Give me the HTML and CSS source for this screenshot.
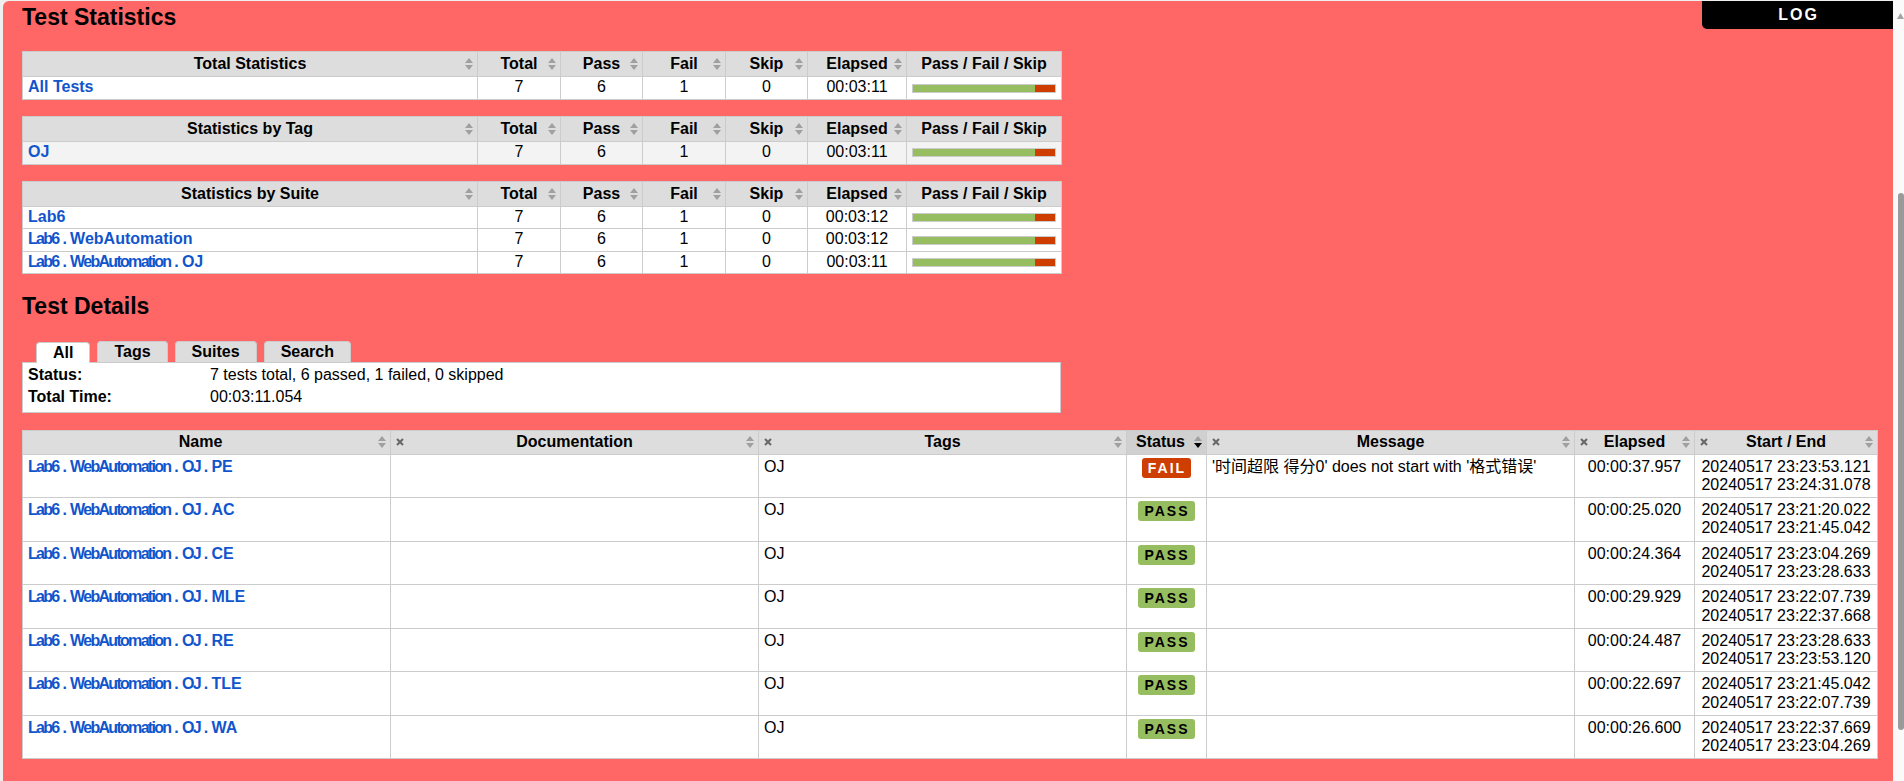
FILE: index.html
```html
<!DOCTYPE html>
<html lang="en">
<head>
<meta charset="utf-8">
<title>Lab6 Report</title>
<link rel="stylesheet" href="styles.css">
</head>
<body>
<div class="viewport">
  <main class="page">
    <div class="panel">
      <a class="log-link" href="#">LOG</a>

      <h2 class="section-title">Test Statistics</h2>

      <table class="statistics">
        <colgroup>
          <col class="c-name"><col class="c-stat"><col class="c-stat2"><col class="c-stat"><col class="c-stat2"><col class="c-elapsed"><col class="c-graph">
        </colgroup>
        <thead>
          <tr>
            <th class="sortable">Total Statistics</th>
            <th class="sortable">Total</th>
            <th class="sortable">Pass</th>
            <th class="sortable">Fail</th>
            <th class="sortable">Skip</th>
            <th class="sortable">Elapsed</th>
            <th class="graph-head">Pass / Fail / Skip</th>
          </tr>
        </thead>
        <tbody>
          <tr>
            <td class="stat-name"><a href="#">All Tests</a></td>
            <td>7</td><td>6</td><td>1</td><td>0</td><td>00:03:11</td>
            <td class="graph-cell"><div class="graph"><div class="pass-bar" style="width:85.71%"></div><div class="fail-bar" style="width:14.29%"></div></div></td>
          </tr>
        </tbody>
      </table>

      <table class="statistics">
        <colgroup>
          <col class="c-name"><col class="c-stat"><col class="c-stat2"><col class="c-stat"><col class="c-stat2"><col class="c-elapsed"><col class="c-graph">
        </colgroup>
        <thead>
          <tr>
            <th class="sortable">Statistics by Tag</th>
            <th class="sortable">Total</th>
            <th class="sortable">Pass</th>
            <th class="sortable">Fail</th>
            <th class="sortable">Skip</th>
            <th class="sortable">Elapsed</th>
            <th class="graph-head">Pass / Fail / Skip</th>
          </tr>
        </thead>
        <tbody>
          <tr class="highlight">
            <td class="stat-name"><a href="#">OJ</a></td>
            <td>7</td><td>6</td><td>1</td><td>0</td><td>00:03:11</td>
            <td class="graph-cell"><div class="graph"><div class="pass-bar" style="width:85.71%"></div><div class="fail-bar" style="width:14.29%"></div></div></td>
          </tr>
        </tbody>
      </table>

      <table class="statistics">
        <colgroup>
          <col class="c-name"><col class="c-stat"><col class="c-stat2"><col class="c-stat"><col class="c-stat2"><col class="c-elapsed"><col class="c-graph">
        </colgroup>
        <thead>
          <tr>
            <th class="sortable">Statistics by Suite</th>
            <th class="sortable">Total</th>
            <th class="sortable">Pass</th>
            <th class="sortable">Fail</th>
            <th class="sortable">Skip</th>
            <th class="sortable">Elapsed</th>
            <th class="graph-head">Pass / Fail / Skip</th>
          </tr>
        </thead>
        <tbody>
          <tr>
            <td class="stat-name"><a href="#">Lab6</a></td>
            <td>7</td><td>6</td><td>1</td><td>0</td><td>00:03:12</td>
            <td class="graph-cell"><div class="graph"><div class="pass-bar" style="width:85.71%"></div><div class="fail-bar" style="width:14.29%"></div></div></td>
          </tr>
          <tr>
            <td class="stat-name"><a href="#"><span class="parent">Lab6<span class="sep"> . </span></span>WebAutomation</a></td>
            <td>7</td><td>6</td><td>1</td><td>0</td><td>00:03:12</td>
            <td class="graph-cell"><div class="graph"><div class="pass-bar" style="width:85.71%"></div><div class="fail-bar" style="width:14.29%"></div></div></td>
          </tr>
          <tr>
            <td class="stat-name"><a href="#"><span class="parent">Lab6<span class="sep"> . </span>WebAutomation<span class="sep"> . </span></span>OJ</a></td>
            <td>7</td><td>6</td><td>1</td><td>0</td><td>00:03:11</td>
            <td class="graph-cell"><div class="graph"><div class="pass-bar" style="width:85.71%"></div><div class="fail-bar" style="width:14.29%"></div></div></td>
          </tr>
        </tbody>
      </table>

      <h2 class="section-title details-title">Test Details</h2>

      <ul class="tabs">
        <li class="tab selected">All</li>
        <li class="tab">Tags</li>
        <li class="tab">Suites</li>
        <li class="tab">Search</li>
      </ul>

      <table class="details">
        <tbody>
          <tr><th>Status:</th><td>7 tests total, 6 passed, 1 failed, 0 skipped</td></tr>
          <tr><th>Total Time:</th><td>00:03:11.054</td></tr>
        </tbody>
      </table>

      <table class="test-details">
        <colgroup>
          <col class="t-name"><col class="t-doc"><col class="t-tags"><col class="t-status"><col class="t-msg"><col class="t-elapsed"><col class="t-times">
        </colgroup>
        <thead>
          <tr>
            <th class="sortable name-head">Name</th>
            <th class="sortable hideable">Documentation</th>
            <th class="sortable hideable">Tags</th>
            <th class="sortable sorted status-head">Status</th>
            <th class="sortable hideable">Message</th>
            <th class="sortable hideable">Elapsed</th>
            <th class="sortable hideable">Start / End</th>
          </tr>
        </thead>
        <tbody>
          <tr>
            <td><a class="test-name" href="#"><span class="parent">Lab6<span class="sep"> . </span>WebAutomation<span class="sep"> . </span>OJ<span class="sep"> . </span></span>PE</a></td>
            <td></td>
            <td>OJ</td>
            <td class="center"><span class="label fail">FAIL</span></td>
            <td>'时间超限 得分0' does not start with '格式错误'</td>
            <td class="center">00:00:37.957</td>
            <td class="center">20240517 23:23:53.121<br>20240517 23:24:31.078</td>
          </tr>
          <tr>
            <td><a class="test-name" href="#"><span class="parent">Lab6<span class="sep"> . </span>WebAutomation<span class="sep"> . </span>OJ<span class="sep"> . </span></span>AC</a></td>
            <td></td>
            <td>OJ</td>
            <td class="center"><span class="label pass">PASS</span></td>
            <td></td>
            <td class="center">00:00:25.020</td>
            <td class="center">20240517 23:21:20.022<br>20240517 23:21:45.042</td>
          </tr>
          <tr>
            <td><a class="test-name" href="#"><span class="parent">Lab6<span class="sep"> . </span>WebAutomation<span class="sep"> . </span>OJ<span class="sep"> . </span></span>CE</a></td>
            <td></td>
            <td>OJ</td>
            <td class="center"><span class="label pass">PASS</span></td>
            <td></td>
            <td class="center">00:00:24.364</td>
            <td class="center">20240517 23:23:04.269<br>20240517 23:23:28.633</td>
          </tr>
          <tr>
            <td><a class="test-name" href="#"><span class="parent">Lab6<span class="sep"> . </span>WebAutomation<span class="sep"> . </span>OJ<span class="sep"> . </span></span>MLE</a></td>
            <td></td>
            <td>OJ</td>
            <td class="center"><span class="label pass">PASS</span></td>
            <td></td>
            <td class="center">00:00:29.929</td>
            <td class="center">20240517 23:22:07.739<br>20240517 23:22:37.668</td>
          </tr>
          <tr>
            <td><a class="test-name" href="#"><span class="parent">Lab6<span class="sep"> . </span>WebAutomation<span class="sep"> . </span>OJ<span class="sep"> . </span></span>RE</a></td>
            <td></td>
            <td>OJ</td>
            <td class="center"><span class="label pass">PASS</span></td>
            <td></td>
            <td class="center">00:00:24.487</td>
            <td class="center">20240517 23:23:28.633<br>20240517 23:23:53.120</td>
          </tr>
          <tr>
            <td><a class="test-name" href="#"><span class="parent">Lab6<span class="sep"> . </span>WebAutomation<span class="sep"> . </span>OJ<span class="sep"> . </span></span>TLE</a></td>
            <td></td>
            <td>OJ</td>
            <td class="center"><span class="label pass">PASS</span></td>
            <td></td>
            <td class="center">00:00:22.697</td>
            <td class="center">20240517 23:21:45.042<br>20240517 23:22:07.739</td>
          </tr>
          <tr>
            <td><a class="test-name" href="#"><span class="parent">Lab6<span class="sep"> . </span>WebAutomation<span class="sep"> . </span>OJ<span class="sep"> . </span></span>WA</a></td>
            <td></td>
            <td>OJ</td>
            <td class="center"><span class="label pass">PASS</span></td>
            <td></td>
            <td class="center">00:00:26.600</td>
            <td class="center">20240517 23:22:37.669<br>20240517 23:23:04.269</td>
          </tr>
        </tbody>
      </table>
    </div>
  </main>
  <div class="scrollbar" aria-hidden="true">
    <svg class="scroll-arrow" width="7" height="6" viewBox="0 0 7 6"><path d="M0 6L3.5 0L7 6Z" fill="#a3a3a3"/></svg>
    <div class="scroll-thumb"></div>
  </div>
</div>
</body>
</html>
```

FILE: styles.css
```css
:root {
  --sort: url("data:image/svg+xml,%3Csvg xmlns='http://www.w3.org/2000/svg' width='8' height='12'%3E%3Cpath d='M0 5L4 0L8 5Z M0 7L8 7L4 12Z' fill='%23a0a0a0'/%3E%3C/svg%3E");
  --sort-desc: url("data:image/svg+xml,%3Csvg xmlns='http://www.w3.org/2000/svg' width='8' height='12'%3E%3Cpath d='M0 5L4 0L8 5Z' fill='%23a0a0a0'/%3E%3Cpath d='M0 7L8 7L4 12Z' fill='%23000'/%3E%3C/svg%3E");
  --hide: url("data:image/svg+xml,%3Csvg xmlns='http://www.w3.org/2000/svg' width='8' height='8'%3E%3Cpath d='M1 1L7 7M7 1L1 7' stroke='%23666' stroke-width='2'/%3E%3C/svg%3E");
}

* {
  box-sizing: border-box;
}

html,
body {
  margin: 0;
  height: 100%;
}

body {
  font-family: "Liberation Sans", "Noto Sans CJK SC", sans-serif;
  font-size: 16px;
  line-height: 1.15;
  color: #000;
  background: #f0f0f0;
  overflow: hidden;
}

a {
  color: #15c;
  text-decoration: none;
}

.viewport {
  display: flex;
  height: 781px;
}

.page {
  flex: 1;
  min-width: 0;
  padding: 1px 0 0 3px;
  background: #efefef;
}

.panel {
  position: relative;
  height: 780px;
  overflow: hidden;
  background: #f66;
  border-top-left-radius: 6px;
  padding: 0 16px 0 19px;
}

/* LOG link in the corner */
.log-link {
  position: absolute;
  top: 0;
  right: 0;
  width: 191px;
  height: 28px;
  padding-left: 2px;
  background: #000;
  color: #fff;
  font-weight: bold;
  font-size: 16px;
  letter-spacing: 2px;
  line-height: 28px;
  text-align: center;
  border-bottom-left-radius: 5px;
}

.section-title {
  margin: 3px 0 21px;
  font-size: 23px;
  line-height: 26px;
  font-weight: bold;
}

.details-title {
  margin-top: 19px;
  margin-bottom: 22px;
}

/* statistics tables */
.statistics {
  width: 1039px;
  table-layout: fixed;
  border-collapse: collapse;
  background: #fff;
  margin-bottom: 16px;
}

.c-name { width: 455px; }
.c-stat { width: 83px; }
.c-stat2 { width: 82px; }
.c-elapsed { width: 99px; }
.c-graph { width: 155px; }

.statistics th {
  background-color: #ddd;
  border: 1px solid #ccc;
  padding: 3px 14px;
  font-weight: bold;
  text-align: center;
  white-space: nowrap;
}

.statistics th.sortable {
  background-image: var(--sort);
  background-repeat: no-repeat;
  background-position: right 4px center;
}

.statistics th.graph-head {
  padding: 3px 2px;
}

.statistics td {
  border: 1px solid #ccc;
  padding: 1px 5px 2px;
  text-align: center;
  white-space: nowrap;
}

.statistics td.stat-name {
  text-align: left;
  font-weight: bold;
}

.statistics tr.highlight td {
  background: #f3f3f3;
}

/* parent suite names are drawn condensed */
.parent {
  letter-spacing: -1.7px;
}

.parent .sep {
  letter-spacing: -0.6px;
}

.graph-cell {
  vertical-align: middle;
}

.statistics td.graph-cell {
  padding: 0 5px;
}

.graph {
  display: flex;
  height: 9px;
  border: 1px solid #ccc;
  background: #fff;
}

.pass-bar {
  height: 100%;
  background: #97bd61;
}

.fail-bar {
  height: 100%;
  background: #ce3e01;
}

/* tabs */
.tabs {
  list-style: none;
  margin: 0;
  padding: 0 0 0 14px;
  display: flex;
  align-items: flex-end;
  gap: 7px;
  height: 21px;
}

.tab {
  height: 21px;
  padding: 0 16px;
  border: 1px solid #ccc;
  border-bottom: 0;
  border-radius: 4px 4px 0 0;
  background: #ddd;
  font-weight: bold;
  line-height: 20px;
}

.tab.selected {
  position: relative;
  margin-bottom: -1px;
  background: #fff;
}

/* summary box */
.details {
  width: 1039px;
  border: 1px solid #ccc;
  background: #fff;
  border-collapse: separate;
  border-spacing: 0;
  padding: 1px 0 4px;
}

.details th {
  width: 182px;
  height: 22px;
  padding: 0 5px;
  text-align: left;
  font-weight: bold;
}

.details td {
  padding: 0 5px;
}

/* test details */
.test-details {
  width: 100%;
  table-layout: fixed;
  border-collapse: collapse;
  background: #fff;
  margin-top: 17px;
}

.t-name { width: 368px; }
.t-doc { width: 368px; }
.t-tags { width: 368px; }
.t-status { width: 80px; }
.t-msg { width: 368px; }
.t-elapsed { width: 120px; }
.t-times { width: 183px; }

.test-details th {
  background-color: #ddd;
  border: 1px solid #ccc;
  padding: 2px 16px;
  font-weight: bold;
  text-align: center;
  white-space: nowrap;
  background-repeat: no-repeat;
}

.test-details th.sortable {
  background-image: var(--sort);
  background-position: right 4px center;
}

.test-details th.sortable.hideable {
  background-image: var(--hide), var(--sort);
  background-position: left 5px top 7px, right 4px center;
}

.test-details th.name-head {
  padding-left: 4px;
}

.test-details th.sorted {
  background-color: #d0d0d0;
  background-image: var(--sort-desc);
}

.test-details th.status-head {
  padding: 2px 16px 2px 4px;
}

.test-details td {
  border: 1px solid #ccc;
  padding: 3px 5px 2.75px;
  vertical-align: top;
}

.test-details td.center {
  text-align: center;
}

.test-name {
  font-weight: bold;
}

.label {
  display: inline-block;
  padding: 1px 5px 1px 6px;
  border-radius: 3px;
  font-size: 14px;
  font-weight: bold;
  letter-spacing: 2px;
  line-height: 18px;
}

.label.fail {
  background: #ce3e01;
  color: #fff;
}

.label.pass {
  background: #97bd61;
  color: #000;
}

/* scrollbar column */
.scrollbar {
  width: 11px;
  flex-shrink: 0;
  background: #fafafa;
  padding: 13px 0 0 4px;
}

.scroll-arrow {
  display: block;
}

.scroll-thumb {
  width: 6px;
  height: 537px;
  margin-top: 174px;
  margin-left: 1px;
  background: #9a9a9a;
  border-radius: 3px;
}
```
